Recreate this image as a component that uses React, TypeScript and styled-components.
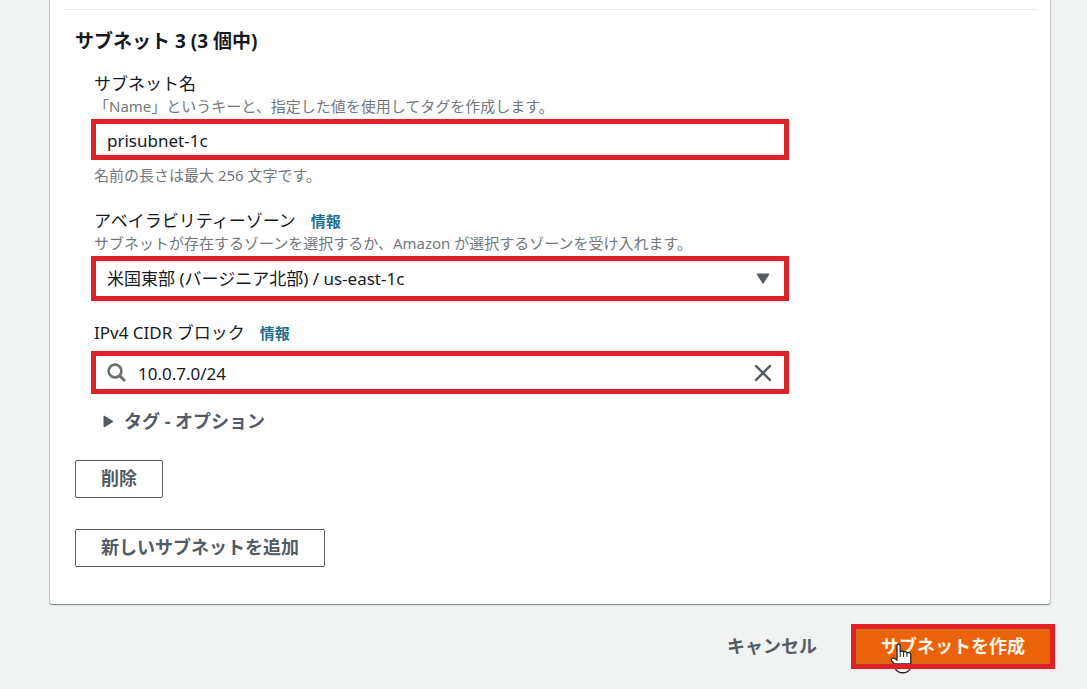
import { useId, useState } from "react";
import type { ReactNode } from "react";
import styled, { createGlobalStyle, css } from "styled-components";

const GlobalStyle = createGlobalStyle`
  *, *::before, *::after { box-sizing: border-box; }
  body {
    margin: 0;
    background: #f1f3f3;
    color: #16191f;
    font-family: "Noto Sans", "Noto Sans CJK JP", sans-serif;
    font-size: 17px;
    line-height: 24px;
  }
  button, input, select { font: inherit; color: inherit; }
`;

const Page = styled.main`
  padding: 0 37px 20px 50px;
`;

const Card = styled.section`
  background: #fff;
  padding: 9px 13px 37px;
  border-radius: 0 0 2px 2px;
  box-shadow: 0 1px 1px #7d8489, 0 0 1px 1px #c3c8ca;
`;

const Divider = styled.hr`
  margin: 0;
  border: 0;
  border-top: 1px solid #e6e8e9;
`;

const CardBody = styled.div`
  padding: 19px 12px 0;
`;

const Heading = styled.h2`
  margin: 0 0 19px;
  font-size: 19px;
  line-height: 24px;
  font-weight: 700;
`;

const FieldGrid = styled.div`
  display: grid;
  grid-template-columns: 698fr 236fr;
  padding-left: 16px;
`;

const Fields = styled.div`
  display: flex;
  flex-direction: column;
  gap: 20px;
`;

const FieldRoot = styled.div`
  display: flex;
  flex-direction: column;
`;

const ControlFrame = styled.div<{ $height: number }>`
  display: flex;
  align-items: center;
  gap: 12px;
  height: ${(p) => p.$height}px;
  margin-top: 3px;
  padding: 0 12px 0 11px;
  border: 5px solid #dc2229;
  background: #fff;
`;

const LabelRow = styled.div`
  display: flex;
  gap: 15px;
  padding-left: 3px;
  white-space: nowrap;

  & + ${ControlFrame} {
    margin-top: 6px;
  }
`;

const InfoLink = styled.a`
  font-size: 15px;
  font-weight: 700;
  color: #24708f;
  text-decoration: none;
`;

const Hint = styled.p`
  margin: 0;
  padding-left: 3px;
  font-size: 15px;
  line-height: 20px;
  color: #72787d;
  white-space: nowrap;
`;

const Note = styled(Hint)`
  margin: 5px 0 4px;
`;

const controlText = css`
  flex: 1;
  min-width: 0;
  padding: 0;
  border: 0;
  outline: 0;
  background: none;
`;

const TextInput = styled.input`
  ${controlText}
  padding-top: 2px;
`;

const Select = styled.select`
  ${controlText}
  appearance: none;
`;

const IconButton = styled.button`
  display: flex;
  padding: 0;
  border: 0;
  background: none;
  cursor: pointer;
`;

const Tags = styled.details`
  margin-top: 15px;
  padding-left: 12px;
`;

const TagsSummary = styled.summary`
  display: flex;
  align-items: center;
  gap: 10px;
  list-style: none;
  color: #545b64;
  font-size: 18px;
  font-weight: 700;
  cursor: pointer;
`;

const Actions = styled.div`
  display: flex;
  flex-direction: column;
  align-items: flex-start;
  gap: 31px;
  margin-top: 27px;
`;

const Button = styled.button`
  height: 38px;
  padding: 0 25px 2px;
  border: 1px solid #545b64;
  border-radius: 2px;
  background: #fff;
  color: #545b64;
  font-size: 18px;
  line-height: 24px;
  font-weight: 700;
  cursor: pointer;
`;

const Footer = styled.footer`
  display: flex;
  justify-content: flex-end;
  align-items: center;
  gap: 8px;
  margin: 20px -5px 0 0;
`;

const LinkButton = styled(Button)`
  border-color: transparent;
  background: none;
`;

const PrimaryFrame = styled.div`
  position: relative;
  border: 5px solid #e31f26;
`;

const PrimaryButton = styled(Button)`
  display: block;
  height: 35px;
  padding: 0 24px 2px;
  border-color: #c9711f;
  border-radius: 0;
  background: #ea620a;
  color: #fdf3e6;
`;

const Pointer = styled.svg`
  position: absolute;
  left: 34px;
  top: 13px;
  pointer-events: none;
`;

function Field(props: {
  label: string;
  hint?: string;
  note?: string;
  info?: boolean;
  height: number;
  children: (id: string) => ReactNode;
}) {
  const id = useId();
  return (
    <FieldRoot>
      <LabelRow>
        <label htmlFor={id}>{props.label}</label>
        {props.info && <InfoLink href="#info">情報</InfoLink>}
      </LabelRow>
      {props.hint && <Hint>{props.hint}</Hint>}
      <ControlFrame $height={props.height}>{props.children(id)}</ControlFrame>
      {props.note && <Note>{props.note}</Note>}
    </FieldRoot>
  );
}

const SearchIcon = () => (
  <svg width="19" height="19" viewBox="0 0 19 19" fill="none" stroke="#6b7075" strokeWidth="2.6" aria-hidden>
    <circle cx="8" cy="8" r="6.4" />
    <path d="M12.6 12.6 18 18" strokeWidth="3" />
  </svg>
);

const CloseIcon = () => (
  <svg width="18" height="18" viewBox="0 0 18 18" fill="none" stroke="#545b64" strokeWidth="2.4" aria-hidden>
    <path d="M1.4 1.4 16.6 16.6M16.6 1.4 1.4 16.6" />
  </svg>
);

const CaretDown = () => (
  <svg width="18" height="12" viewBox="0 0 18 12" aria-hidden>
    <path d="M3 1h12L9 10.4z" fill="#545b64" stroke="#545b64" strokeLinejoin="round" />
  </svg>
);

const CaretRight = () => (
  <svg width="11" height="13" viewBox="0 0 11 13" aria-hidden>
    <path d="M1 1v11l9-5.500z" fill="#545b64" stroke="#545b64" strokeLinejoin="round" />
  </svg>
);

const HandPointer = () => (
  <Pointer width="24" height="34" viewBox="0 0 24 34" aria-hidden>
    <path
      d="M7 3.500c0-2 3.200-2 3.200 0V10c.4-1.500 3.200-1.300 3.400.4.600-1.200 3.200-1 3.400.7.700-1 3.800-.8 3.800 1.400V22H4.500C3.500 21 2.200 19.800 1.600 18.500c-.8-2 1-3.300 2.700-2.300L7 18z"
      fill="#fff"
      stroke="#222"
      strokeWidth="1.300"
    />
    <path d="M10.200 10v5M13.600 11v4M17 12v3" stroke="#222" fill="none" />
    <path d="M0 22h24v5H0z" fill="#e31f26" />
    <path d="M5.500 27c2.500 5 12 5 14.500 0z" fill="#f4f5f5" />
    <path d="M5.500 27c2.500 5 12 5 14.500 0" fill="none" stroke="#222" strokeWidth="1.400" />
  </Pointer>
);

export default function App() {
  const [name, setName] = useState("prisubnet-1c");
  const [cidr, setCidr] = useState("10.0.7.0/24");

  return (
    <>
      <GlobalStyle />
      <Page>
        <Card>
          <Divider />
          <CardBody>
            <Heading>サブネット 3 (3 個中)</Heading>
            <FieldGrid>
              <Fields>
                <Field
                  label="サブネット名"
                  hint="「Name」というキーと、指定した値を使用してタグを作成します。"
                  note="名前の長さは最大 256 文字です。"
                  height={41}
                >
                  {(id) => <TextInput id={id} value={name} onChange={(e) => setName(e.target.value)} />}
                </Field>
                <Field
                  label="アベイラビリティーゾーン"
                  info
                  hint="サブネットが存在するゾーンを選択するか、Amazon が選択するゾーンを受け入れます。"
                  height={45}
                >
                  {(id) => (
                    <>
                      <Select id={id}>
                        <option>米国東部 (バージニア北部) / us-east-1c</option>
                      </Select>
                      <CaretDown />
                    </>
                  )}
                </Field>
                <Field label="IPv4 CIDR ブロック" info height={43}>
                  {(id) => (
                    <>
                      <SearchIcon />
                      <TextInput id={id} value={cidr} onChange={(e) => setCidr(e.target.value)} />
                      <IconButton type="button" aria-label="クリア" onClick={() => setCidr("")}>
                        <CloseIcon />
                      </IconButton>
                    </>
                  )}
                </Field>
              </Fields>
            </FieldGrid>
            <FieldGrid>
              <Tags>
                <TagsSummary>
                  <CaretRight />
                  タグ - オプション
                </TagsSummary>
              </Tags>
            </FieldGrid>
            <Actions>
              <Button type="button">削除</Button>
              <Button type="button">新しいサブネットを追加</Button>
            </Actions>
          </CardBody>
        </Card>
        <Footer>
          <LinkButton type="button">キャンセル</LinkButton>
          <PrimaryFrame>
            <PrimaryButton type="button">サブネットを作成</PrimaryButton>
            <HandPointer />
          </PrimaryFrame>
        </Footer>
      </Page>
    </>
  );
}
